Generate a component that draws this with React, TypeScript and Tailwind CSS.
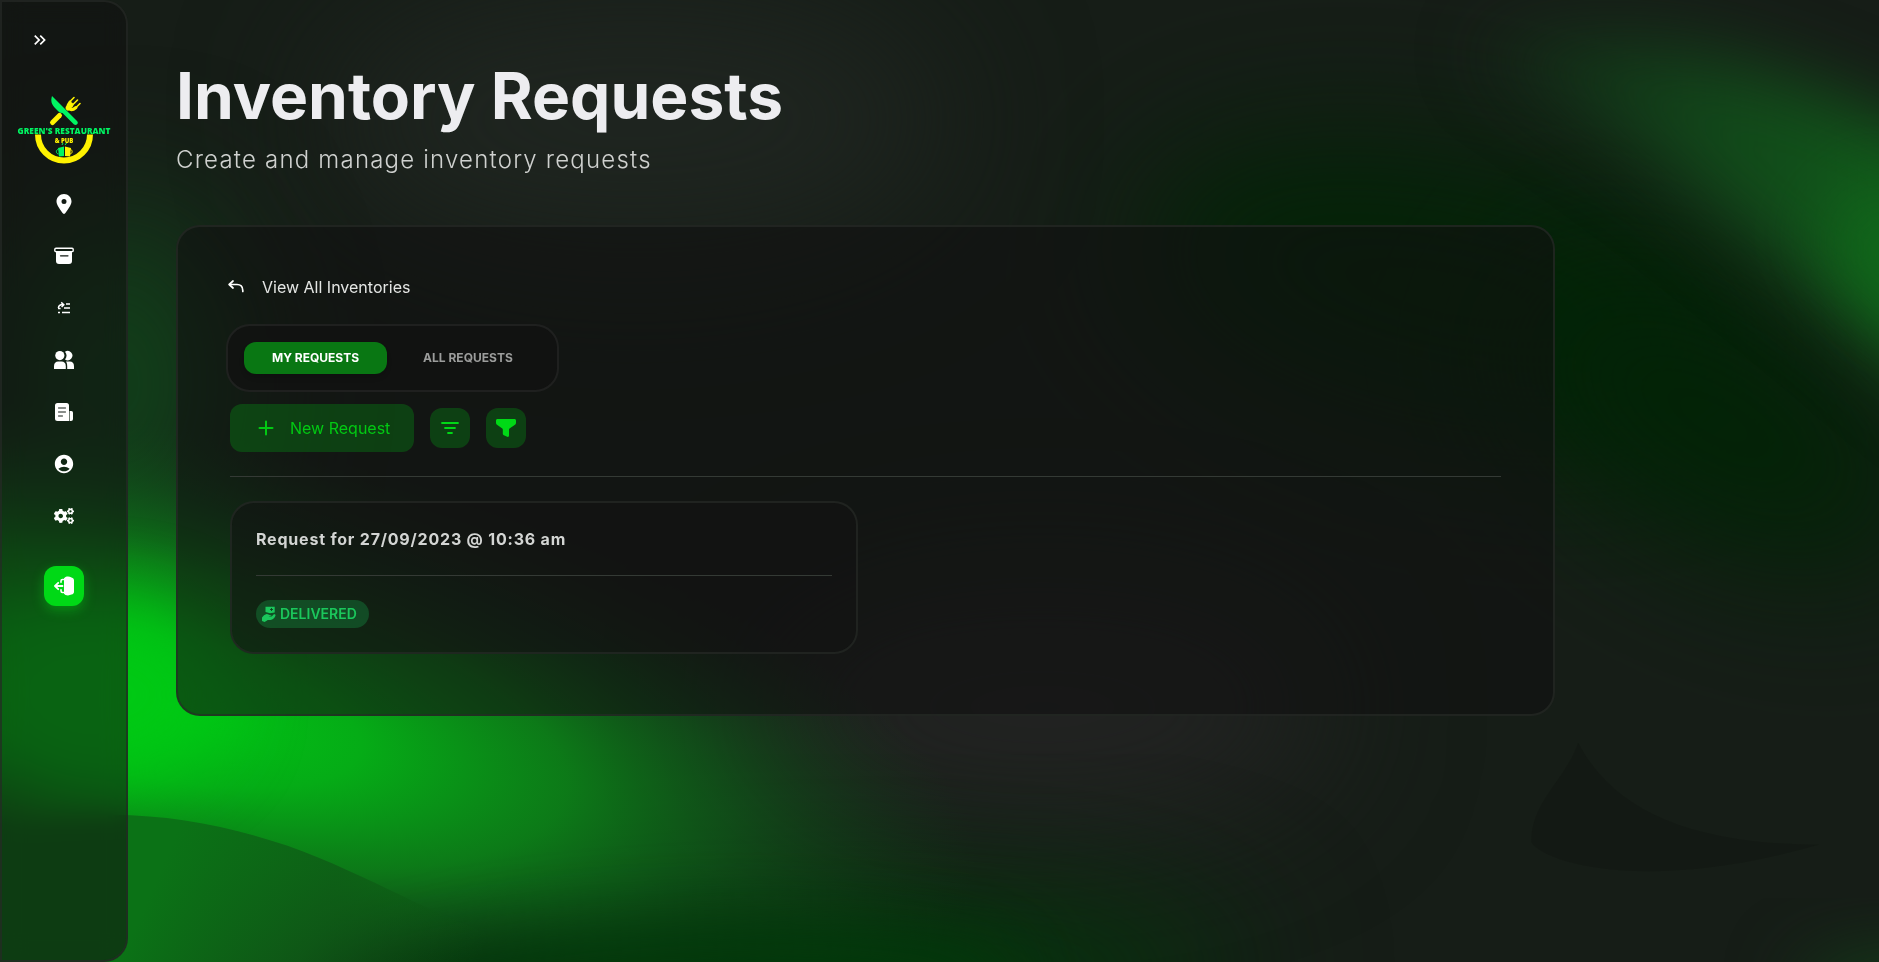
import { useState } from 'react';
import type { ReactNode } from 'react';
import { FaCogs } from 'react-icons/fa';
import { FaLocationDot } from 'react-icons/fa6';
import { MdAccountCircle, MdKeyboardDoubleArrowRight } from 'react-icons/md';

const ArchiveIcon = () => (
  <svg viewBox="0 0 20 20" className="w-5 h-5" fill="none">
    <rect x="0.8" y="2.2" width="18.4" height="3.4" rx="1.2" stroke="white" strokeWidth="1.4" />
    <path d="M2 6h16v9a3 3 0 0 1-3 3H5a3 3 0 0 1-3-3V6z" fill="white" />
    <path d="M6.5 9.8h7.5" stroke="#121a14" strokeWidth="1.2" strokeLinecap="round" />
  </svg>
);

const RequestListIcon = () => (
  <svg viewBox="0 0 14 14" className="w-3.5 h-3.5" fill="none" stroke="white" strokeWidth="1.5">
    <path d="M9 3h4M7 7h6M5 11.4h8M1 7.5h2.6M1 11.4h2" />
    <path d="M1.4 7C1.6 4.4 3 3.6 6 3.6M4.2 1.4l2.6 2.3L4.6 6" />
  </svg>
);

const PeopleIcon = () => (
  <svg viewBox="0 0 20 20" className="w-5 h-5" fill="white">
    <circle cx="5.8" cy="5.6" r="4.6" />
    <path d="M0 16.2c0-3 1.7-4.6 4.2-4.6h3.4c2.5 0 4.2 1.6 4.2 4.6V19H0v-2.8z" />
    <path d="M11 1.7a4.7 4.7 0 1 1 0 7.8 6.2 6.2 0 0 0 0-7.8z" />
    <path d="M12 11.6h3.8c2.6 0 4.2 1.6 4.2 4.6V19h-6.8v-2.8c0-2-.4-3.4-1.2-4.6z" />
  </svg>
);

const NewsIcon = () => (
  <svg viewBox="0 0 18 18" className="w-[18px] h-[18px]" fill="none">
    <path d="M2.5 0h9A2.5 2.5 0 0 1 14 2.5V18H2.5A2.5 2.5 0 0 1 0 15.5v-13A2.5 2.5 0 0 1 2.5 0z" fill="white" />
    <path d="M14.6 8h1.8A1.6 1.6 0 0 1 18 9.6V16a2 2 0 0 1-2 2h-1.4V8z" fill="white" />
    <path d="M3.5 5h7M3.5 9h7M3.5 13h4" stroke="#121a14" strokeWidth="1" strokeLinecap="round" />
  </svg>
);

const LogoutIcon = () => (
  <svg viewBox="0 0 20 20" className="w-5 h-5" fill="none" stroke="white" strokeLinecap="round" strokeLinejoin="round">
    <path d="M10 2.2 11.5 1c2-.6 4-.5 6 .4 1.7.6 2.5 1.4 2.5 2.900v11.400c0 1.500-.8 2.300-2.500 2.900-2 .9-4 1-6 .4L10 17.800z" fill="white" stroke="none" />
    <path d="M9.5 3.5H8.600C7.6 3.500 7 4 7 5v1.200M9.500 16.500h-.9c-1 0-1.600-.5-1.600-1.500v-1.200" strokeWidth="1.6" />
    <path d="M8.5 10H1.2M4.2 6.800 1 10l3.200 3.200" strokeWidth="1.8" />
  </svg>
);

const BackIcon = () => (
  <svg viewBox="0 0 16 16" className="w-4 h-4" fill="none" stroke="white" strokeWidth="1.7" strokeLinecap="round" strokeLinejoin="round">
    <path d="M5 2 1.2 5.500 5 9" />
    <path d="M1.6 5.500H9c3.400 0 5.800 1.600 5.800 6v1" />
  </svg>
);

const SortIcon = () => (
  <svg viewBox="0 0 20 20" className="w-5 h-5" fill="none" stroke="currentColor" strokeWidth="1.8" strokeLinecap="round">
    <path d="M2 5h16M5 10h10M8 15h4" />
  </svg>
);

const FunnelIcon = () => (
  <svg viewBox="0 0 20 20" className="w-5 h-5" fill="currentColor">
    <path d="M1.5 1h17c.9 0 1.500.6 1.500 1.500v2.200c0 .9-.3 1.500-1 2L13.500 10.500c-.4.3-.5.6-.5 1.100v6c0 .7-.4 1.300-1.200 1.300-.4 0-.8-.1-1.200-.3l-2.700-1.300c-.8-.4-1.100-.9-1.100-1.700v-4c0-.5-.1-.8-.5-1.100L1 6.700c-.7-.5-1-1.100-1-2V2.500C0 1.600.6 1 1.500 1z" />
  </svg>
);

const DeliveredIcon = () => (
  <svg viewBox="0 0 14 16" className="w-3.5 h-4" fill="currentColor">
    <path d="M3.500.8h9.200v5.800L8 7.200 3.500 6z" />
    <path d="M8 3.500h3M9.500 2v3" stroke="#123f20" strokeWidth=".9" />
    <path d="M2 9.200 4.500 8c2 0 3 1.400 5 1.400-.2 1-1.400 1.300-3 1.200 2 .7 3.500.2 5-2 .8-.6 2.200-.2 2 .8-.7 2.400-2.700 4.100-5 4.500H5.800L2.600 16 0 15v-3.500z" />
  </svg>
);

const Logo = () => (
  <svg viewBox="0 0 96 72" className="w-24 h-[72px]" role="img" aria-label="Green's Restaurant & Pub">
    <path d="M22 38.500a26 26 0 0 0 52 0" fill="none" stroke="#fff200" strokeWidth="6" />
    <g stroke="#fff200" fill="none" strokeLinecap="round">
      <path d="m36.500 26.500 7-7" strokeWidth="5" />
      <path d="m52 12 3-3" strokeWidth="5" />
      <path d="M54 6c-2 3-3 4.500-1 6.500s4 1.500 7-1" strokeWidth="3" />
      <path d="m54 5.500 4-4M57 8.500l4.500-4.500M60 11.500l4-4" strokeWidth="1.6" />
    </g>
    <path d="M36 0c-1.500 5-.5 8.500 3.500 12.500 2.500 2.500 4 4.500 7 4.500l11.500 11.500c3 1.500 5-1.500 3-3.500z" fill="#00f562" />
    <text x="48" y="38" textAnchor="middle" fill="#00f562" fontSize="8.300" className="font-['Open_Sans'] font-extrabold">
      GREEN'S RESTAURANT
    </text>
    <text x="48" y="47" textAnchor="middle" fill="#fff200" fontSize="6" className="font-['Open_Sans'] font-extrabold">
      &amp; PUB
    </text>
    <path d="m42 52 6-1.500v9.500l-5 .5z" fill="#00f562" />
    <path d="M42 53.500c-2 .2-2.500 4 .5 4.500" fill="none" stroke="#00f562" />
    <path d="m49 50.500 6 1.500-1 8.500-5-.5z" fill="#fff200" />
    <path d="M54.500 53.500c2 .2 2.500 4-.5 4.500" fill="none" stroke="#fff200" />
    <path d="m46 49 1-2m2 2 1.500-2" stroke="#00f562" />
  </svg>
);

// Blurred green waves behind the whole page
const Backdrop = () => (
  <svg viewBox="0 0 1568 803" preserveAspectRatio="none" className="fixed inset-0 w-full h-full" aria-hidden="true">
    <defs>
      <filter id="soft" x="-100%" y="-100%" width="300%" height="300%" colorInterpolationFilters="sRGB">
        <feGaussianBlur stdDeviation="60" />
      </filter>
      <filter id="mid" x="-100%" y="-100%" width="300%" height="300%" colorInterpolationFilters="sRGB">
        <feGaussianBlur stdDeviation="30" />
      </filter>
      <linearGradient id="wave" gradientUnits="userSpaceOnUse" x1="150" y1="690" x2="400" y2="800">
        <stop offset="0" stopColor="#0b7216" />
        <stop offset="0.5" stopColor="#0e5c16" stopOpacity="0.85" />
        <stop offset="1" stopColor="#0a5210" stopOpacity="0" />
      </linearGradient>
      <linearGradient id="ridge">
        <stop offset="0" stopColor="#123a1a" stopOpacity="0.5" />
        <stop offset="0.5" stopColor="#12481a" />
        <stop offset="1" stopColor="#10601a" />
      </linearGradient>
      <radialGradient id="glow">
        <stop offset="0" stopColor="#00c814" />
        <stop offset="0.25" stopColor="#05ac16" />
        <stop offset="0.5" stopColor="#0b8a18" stopOpacity="0.85" />
        <stop offset="0.7" stopColor="#0e681a" stopOpacity="0.6" />
        <stop offset="1" stopColor="#12441a" stopOpacity="0" />
      </radialGradient>
    </defs>
    <rect width="1568" height="803" fill="#161d17" />
    <ellipse cx="530" cy="100" rx="260" ry="110" fill="#1f2520" filter="url(#soft)" />
    <ellipse cx="870" cy="590" rx="240" ry="100" fill="#222322" filter="url(#soft)" />
    <ellipse cx="100" cy="320" rx="90" ry="150" fill="#11421a" filter="url(#soft)" />
    <ellipse cx="1210" cy="245" rx="270" ry="120" transform="rotate(12 1210 245)" fill="#022306" filter="url(#soft)" />
    <ellipse cx="1430" cy="350" rx="200" ry="100" transform="rotate(30 1430 350)" fill="#022306" filter="url(#soft)" />
    <path d="M1230 40C1370 10 1500 60 1640 130V350C1540 270 1430 160 1230 40z" fill="url(#ridge)" filter="url(#mid)" />
    <ellipse cx="1590" cy="220" rx="70" ry="40" transform="rotate(45 1590 220)" fill="#106a1a" filter="url(#mid)" />
    <ellipse cx="700" cy="810" rx="340" ry="60" fill="#02380a" filter="url(#soft)" />
    <ellipse cx="130" cy="590" rx="700" ry="235" transform="rotate(12 130 590)" fill="url(#glow)" />
    <ellipse cx="80" cy="580" rx="110" ry="80" fill="#00c814" filter="url(#mid)" />
    <ellipse cx="560" cy="830" rx="300" ry="60" transform="rotate(-3 560 830)" fill="#02380a" filter="url(#mid)" />
    <path d="M-40 700C70 670 150 676 240 706C340 742 400 795 520 803H-40z" fill="url(#wave)" />
    <path d="M1317 620c-10 30-40 50-39 83 8 15 90 45 240 2-100 0-170-25-201-85z" fill="#131713" opacity="0.6" />
    <ellipse cx="1590" cy="825" rx="90" ry="25" fill="#134019" filter="url(#mid)" />
  </svg>
);

const navItems: { label: string; icon: ReactNode }[] = [
  { label: 'Locations', icon: <FaLocationDot className="w-5 h-5" /> },
  { label: 'Inventories', icon: <ArchiveIcon /> },
  { label: 'Requests', icon: <RequestListIcon /> },
  { label: 'Users', icon: <PeopleIcon /> },
  { label: 'News', icon: <NewsIcon /> },
  { label: 'Profile', icon: <MdAccountCircle className="w-[22px] h-[22px]" /> },
  { label: 'Settings', icon: <FaCogs className="w-5 h-5" /> },
];

const tabs = [
  { id: 'mine', label: 'MY REQUESTS' },
  { id: 'all', label: 'ALL REQUESTS' },
];

const requests = [{ id: 1, title: 'Request for 27/09/2023 @ 10:36 am', status: 'DELIVERED' }];

const Sidebar = () => (
  <aside className="sticky top-0 h-screen w-32 shrink-0 flex flex-col items-center rounded-r-3xl border-2 border-[#262b27]/70 bg-[#111111]/55 backdrop-blur-md text-white">
    <button type="button" aria-label="Expand menu" className="self-start ml-7 mt-7">
      <MdKeyboardDoubleArrowRight className="w-5 h-5" />
    </button>
    <a href="#home" className="mt-[46px]">
      <Logo />
    </a>
    <nav className="mt-2.5 flex flex-col items-center">
      {navItems.map((item) => (
        <a key={item.label} href="#" aria-label={item.label} className="w-10 h-[52px] flex items-center justify-center">
          {item.icon}
        </a>
      ))}
    </nav>
    <button
      type="button"
      aria-label="Log out"
      className="mt-6 w-10 h-10 rounded-xl bg-[#00d916] flex items-center justify-center shadow-[0_4px_12px_rgba(0,217,22,0.4)]"
    >
      <LogoutIcon />
    </button>
  </aside>
);

export default function App() {
  const [tab, setTab] = useState('mine');

  return (
    <div className="relative min-h-screen bg-[#161d17] font-['Inter',sans-serif]">
      <Backdrop />
      <div className="relative flex">
        <Sidebar />

        <main className="flex-1 px-12 pt-16 pb-12">
          <h1 className="text-[64px] leading-[64px] font-bold text-[#ededf0]">Inventory Requests</h1>
          <p className="mt-4 text-2xl font-light tracking-wider text-[#cfd1cf]">Create and manage inventory requests</p>

          <section className="mt-[49px] w-10/12 rounded-3xl border-2 border-[#262b27]/70 bg-[#111111]/60 px-[52px] pt-12 pb-[60px]">
            <a href="#inventories" className="-ml-0.5 w-fit flex items-center gap-[18px] text-base text-[#e4e6e4]">
              <BackIcon />
              View All Inventories
            </a>

            {/* Tabs */}
            <div className="-ml-1 mt-[25px] w-fit flex gap-2 rounded-3xl border-2 border-[#262826]/70 bg-[#121212]/80 p-4">
              {tabs.map((item) => (
                <button
                  key={item.id}
                  type="button"
                  onClick={() => setTab(item.id)}
                  className={
                    tab === item.id
                      ? 'h-8 px-7 rounded-xl bg-[#097713] text-xs font-bold text-white shadow-md'
                      : 'h-8 px-7 rounded-xl text-xs font-bold text-[#9c9d9c]'
                  }
                >
                  {item.label}
                </button>
              ))}
            </div>

            {/* Actions */}
            <div className="mt-3 flex items-center gap-4 text-[#00d916]">
              <button type="button" className="h-12 px-6 rounded-xl bg-[#00d916]/22 flex items-center gap-3 text-base text-[#02c913]">
                <svg viewBox="0 0 24 24" className="w-6 h-6" stroke="currentColor" strokeWidth="2" strokeLinecap="round">
                  <path d="M12 5.5v13M5.5 12h13" />
                </svg>
                New Request
              </button>
              <button type="button" aria-label="Sort" className="w-10 h-10 rounded-xl bg-[#00d916]/22 flex items-center justify-center">
                <SortIcon />
              </button>
              <button type="button" aria-label="Filter" className="w-10 h-10 rounded-xl bg-[#00d916]/22 flex items-center justify-center">
                <FunnelIcon />
              </button>
            </div>

            <hr className="my-6 border-[#343a35]" />

            <div className="grid grid-cols-2 gap-4">
              {requests.map((request) => (
                <article key={request.id} className="rounded-3xl border-2 border-[#262b27]/70 bg-[#121212]/60 p-6">
                  <h2 className="text-base font-bold tracking-wider text-[#d3d5d3]">{request.title}</h2>
                  <hr className="my-6 border-[#343a35]" />
                  <span className="w-fit h-7 pl-1.5 pr-3 flex items-center gap-1 rounded-full bg-[#16c65a]/25 text-sm font-semibold text-[#1bc75c]">
                    <DeliveredIcon />
                    {request.status}
                  </span>
                </article>
              ))}
            </div>
          </section>
        </main>
      </div>
    </div>
  );
}
